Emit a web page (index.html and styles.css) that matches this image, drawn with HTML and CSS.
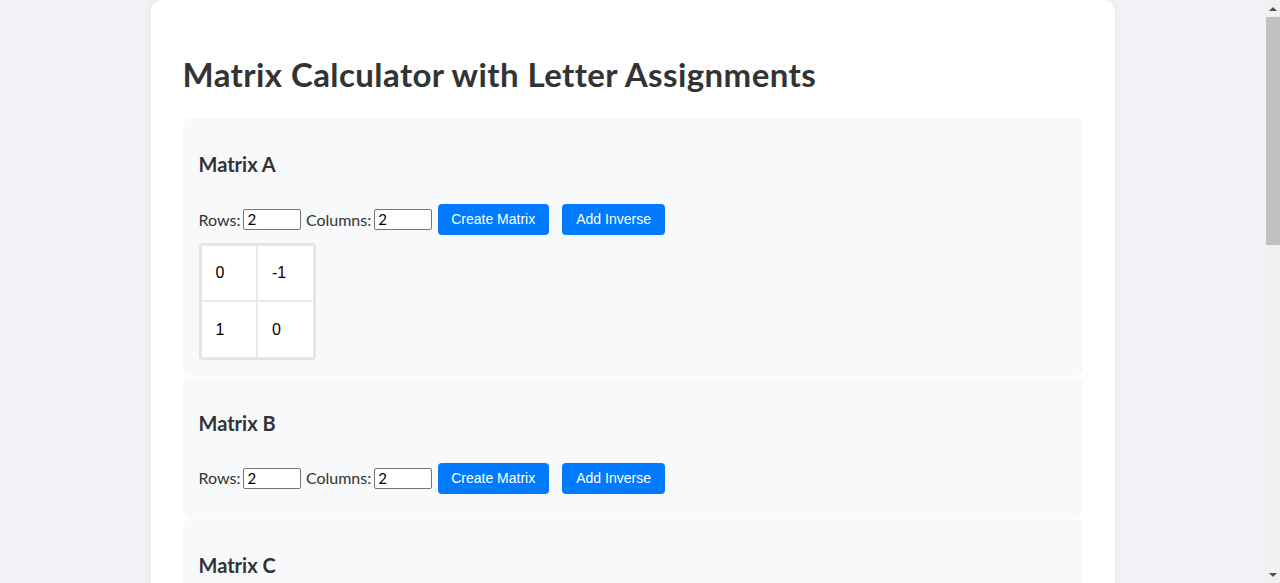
FILE: index.html
```html
<!DOCTYPE html>
<html lang="en">
<head>
<meta charset="utf-8">
<title>Matrix Calculator with Letter Assignments</title>
<link rel="stylesheet" href="styles.css">
</head>
<body>
<div class="container">
  <h1 class="title">Matrix Calculator with Letter Assignments</h1>

  <section class="matrix-section">
    <h3 class="matrix-name">Matrix A</h3>
    <div class="controls">
      <span class="label">Rows:</span>
      <input class="size-input" type="number" value="2">
      <span class="label">Columns:</span>
      <input class="size-input" type="number" value="2">
      <button class="btn btn-create">Create Matrix</button>
      <button class="btn btn-inverse">Add Inverse</button>
    </div>
    <div class="matrix-grid">
      <input class="cell" type="text" value="0">
      <input class="cell" type="text" value="-1">
      <input class="cell" type="text" value="1">
      <input class="cell" type="text" value="0">
    </div>
  </section>

  <section class="matrix-section">
    <h3 class="matrix-name">Matrix B</h3>
    <div class="controls">
      <span class="label">Rows:</span>
      <input class="size-input" type="number" value="2">
      <span class="label">Columns:</span>
      <input class="size-input" type="number" value="2">
      <button class="btn btn-create">Create Matrix</button>
      <button class="btn btn-inverse">Add Inverse</button>
    </div>
  </section>

  <section class="matrix-section">
    <h3 class="matrix-name">Matrix C</h3>
    <div class="controls">
      <span class="label">Rows:</span>
      <input class="size-input" type="number" value="2">
      <span class="label">Columns:</span>
      <input class="size-input" type="number" value="2">
      <button class="btn btn-create">Create Matrix</button>
      <button class="btn btn-inverse">Add Inverse</button>
    </div>
  </section>

  <section class="matrix-section">
    <h3 class="matrix-name">Operation</h3>
    <div class="controls">
      <span class="label">Expression:</span>
      <input class="expr-input" type="text" value="A*B">
      <button class="btn btn-create">Calculate</button>
    </div>
  </section>

  <section class="matrix-section result">
    <h3 class="matrix-name">Result</h3>
    <div class="result-box"></div>
  </section>
</div>

<div class="scrollbar" aria-hidden="true">
  <div class="scroll-arrow scroll-up"><span class="tri tri-up"></span></div>
  <div class="scroll-track"><div class="scroll-thumb"></div></div>
  <div class="scroll-arrow scroll-down"><span class="tri tri-down"></span></div>
</div>
</body>
</html>
```

FILE: styles.css
```css
html, body {
  margin: 0;
  padding: 0;
}

body {
  padding-right: 15px;
  background: #f0f2f5;
  font-family: Lato, "Open Sans", sans-serif;
  font-size: 16px;
  line-height: 1.33;
  color: #333333;
}

.container {
  max-width: 900px;
  min-height: 1351px;
  margin: 0 auto;
  padding: 32px;
  background: #ffffff;
  border-radius: 12px;
  box-shadow: 0 0 10px rgba(0, 0, 0, 0.05);
}

.title {
  margin: 21.4px 0 21.4px;
  font-size: 33px;
  font-weight: 700;
  letter-spacing: 0.42px;
  line-height: 43.6px;
  color: #333333;
}

.matrix-section {
  background: #f8f9fa;
  border-radius: 8px;
  padding: 16px;
  margin-bottom: 1px;
}

.matrix-name {
  margin: 17px 0 0;
  font-size: 20px;
  font-weight: 700;
  line-height: 26.6px;
  color: #333333;
}

.controls {
  display: flex;
  align-items: center;
  padding: 26px 0 8px;
}

.label {
  margin-right: 3px;
}

.size-input {
  box-sizing: border-box;
  width: 58px;
  height: 21px;
  margin: 0 4.5px 0 0;
  padding: 1px 3px;
  border: 1px solid #767676;
  border-radius: 2px;
  background: #ffffff;
  font-family: Lato, "Open Sans", sans-serif;
  font-size: 15px;
  color: #000000;
  -moz-appearance: textfield;
}

.size-input::-webkit-inner-spin-button,
.size-input::-webkit-outer-spin-button {
  -webkit-appearance: none;
  margin: 0;
}

.expr-input {
  box-sizing: border-box;
  width: 200px;
  height: 21px;
  margin: 0 4px 0 0;
  padding: 1px 3px;
  border: 1px solid #767676;
  border-radius: 2px;
  font-size: 15px;
}

.btn {
  height: 31px;
  padding: 0 13.5px;
  border: none;
  border-radius: 4px;
  background: #007bff;
  color: #ffffff;
  font-family: "Liberation Sans", Arial, sans-serif;
  font-size: 14px;
  cursor: pointer;
}

.btn-create {
  margin-left: 1px;
  margin-right: 13px;
}

.btn-inverse {
  padding: 0 14.5px;
}

.matrix-grid {
  display: grid;
  grid-template-columns: repeat(2, 56.5px);
  grid-auto-rows: 56.5px;
  width: fit-content;
  border: 2px solid #e1e4e8;
  border-radius: 4px;
  background: #ffffff;
}

.cell {
  box-sizing: border-box;
  width: 56.5px;
  height: 56.5px;
  margin: 0;
  padding: 0 14px;
  border: 1px solid #e6e9ed;
  background: #ffffff;
  font-family: "Liberation Sans", Arial, sans-serif;
  font-size: 16px;
  color: #000000;
  outline: none;
}

.result-box {
  min-height: 120px;
  margin-top: 16px;
  background: #ffffff;
  border-radius: 4px;
}

/* window scrollbar (drawn, since the headless view hides the native one) */
.scrollbar {
  position: fixed;
  top: 0;
  right: 0;
  width: 15px;
  height: 100vh;
  display: flex;
  flex-direction: column;
  background: #f1f1f1;
}

.scroll-arrow {
  height: 17px;
  display: flex;
  align-items: center;
  justify-content: center;
}

.scroll-track {
  flex: 1;
  position: relative;
}

.scroll-thumb {
  position: absolute;
  top: 0;
  left: 1px;
  right: 0;
  height: 228px;
  background: #c1c1c1;
}

.tri {
  width: 0;
  height: 0;
  border-left: 4px solid transparent;
  border-right: 4px solid transparent;
}

.tri-up {
  border-bottom: 4px solid #505050;
}

.tri-down {
  border-top: 4px solid #505050;
}
```
